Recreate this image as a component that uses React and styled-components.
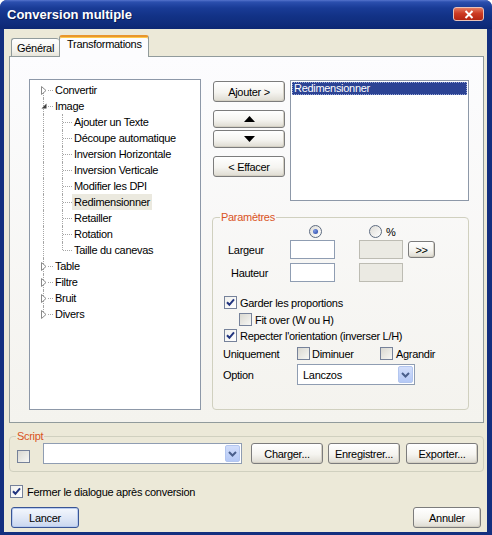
import React from "react";
import styled, { createGlobalStyle, css } from "styled-components";

const GlobalStyle = createGlobalStyle`
  html, body {
    margin: 0;
    padding: 0;
    background: #ffffff;
  }
  body {
    font-family: "Liberation Sans", Arial, sans-serif;
    font-size: 11px;
    letter-spacing: -0.3px;
    color: #000;
  }
  * {
    box-sizing: border-box;
  }
  button, input {
    font: inherit;
    letter-spacing: inherit;
    color: inherit;
  }
`;

const Window = styled.div`
  width: 492px;
  height: 535px;
  display: flex;
  flex-direction: column;
  background: #132f7f;
  border-radius: 7px 7px 0 0;
  overflow: hidden;
`;

const TitleBar = styled.div`
  flex: none;
  height: 29px;
  display: flex;
  align-items: center;
  justify-content: space-between;
  padding: 0 8px 1px 7px;
  background: linear-gradient(
    to bottom,
    #5574cc 0px,
    #2b4fae 2px,
    #193b96 8px,
    #123286 16px,
    #0f2c7c 24px,
    #0c2773 29px
  );
`;

const Title = styled.span`
  color: #fff;
  font-weight: bold;
  font-size: 13px;
  letter-spacing: 0;
  text-shadow: 1px 1px 0 #0a1a50;
`;

const CloseButton = styled.div`
  width: 31px;
  height: 14px;
  border: 1px solid #e9c2b8;
  border-radius: 3px;
  background: linear-gradient(#e47a60, #cd3b24 45%, #b42512);
  display: flex;
  align-items: center;
  justify-content: center;
`;

const Client = styled.div`
  flex: 1;
  margin: 0 5px 3px 4px;
  padding: 6px 3px 0 5px;
  background: #ece9d8;
  display: flex;
  flex-direction: column;
`;

const TabRow = styled.div`
  display: flex;
  align-items: flex-end;
  height: 22px;
  padding-left: 2px;
  margin-bottom: -1px;
  position: relative;
  z-index: 1;
`;

const Tab = styled.div`
  border: 1px solid #919b9c;
  border-bottom: none;
  border-radius: 3px 3px 0 0;
  ${(p) =>
    p.$active
      ? css`
          height: 22px;
          padding: 1px 6px 0 7px;
          line-height: 13px;
          background: #fcfcfe;
          border-top: 2px solid #e8962e;
          box-shadow: inset 0 1px 0 #ffc94a;
        `
      : css`
          height: 18px;
          margin-bottom: 1px;
          padding: 1px 5px 0 5px;
          line-height: 16px;
          background: linear-gradient(#ffffff, #f3f2ec 70%, #e6e4da);
          border-right: none;
        `}
`;

const TabPanel = styled.div`
  height: 367px;
  border: 1px solid #919b9c;
  background: linear-gradient(#fcfcfe, #f4f3ee);
  padding: 22px 13px 12px 19px;
  display: flex;
  gap: 11px;
`;

const Tree = styled.div`
  width: 172px;
  flex: none;
  border: 1px solid #8d98a8;
  background: #fff;
  padding: 2px 0 0 10px;
`;

const TreeRow = styled.div`
  display: flex;
  align-items: center;
  height: 16px;
`;

const Gutter = styled.span`
  position: relative;
  width: 8px;
  height: 16px;
  flex: none;
  display: flex;
  align-items: center;
  &::before {
    content: "";
    position: absolute;
    left: 3px;
    top: ${(p) => (p.$guide === "first" ? "8px" : "0")};
    bottom: ${(p) => (p.$guide === "last" ? "8px" : "0")};
    border-left: 1px dotted #a6a6a6;
  }
  svg {
    position: relative;
    z-index: 1;
    margin-left: 1px;
  }
`;

const HDots = styled.span`
  width: 5px;
  flex: none;
  border-top: 1px dotted #a6a6a6;
`;

const Spacer = styled.span`
  width: ${(p) => p.$w}px;
  flex: none;
`;

const ChildGuide = styled.span`
  position: relative;
  width: 10px;
  height: 16px;
  flex: none;
  &::before {
    content: "";
    position: absolute;
    left: 0;
    top: 0;
    bottom: ${(p) => (p.$last ? "8px" : "0")};
    border-left: 1px dotted #a6a6a6;
  }
  &::after {
    content: "";
    position: absolute;
    left: 1px;
    right: 0;
    top: 8px;
    border-top: 1px dotted #a6a6a6;
  }
`;

const TreeLabel = styled.span`
  padding: 0 2px;
  line-height: 16px;
  white-space: nowrap;
  background: ${(p) => (p.$selected ? "#ebe9df" : "transparent")};
`;

const RightArea = styled.div`
  width: 257px;
  flex: none;
  display: flex;
  flex-direction: column;
`;

const TopRow = styled.div`
  display: flex;
  gap: 5px;
  margin-top: 1px;
  padding-left: 1px;
`;

const ButtonColumn = styled.div`
  width: 72px;
  flex: none;
  display: flex;
  flex-direction: column;
  padding-top: 1px;
`;

const Button = styled.button`
  width: ${(p) => p.$w || 72}px;
  height: ${(p) => p.$h || 21}px;
  margin: 0;
  margin-top: ${(p) => p.$mt || 0}px;
  margin-left: ${(p) => p.$ml || 0}px;
  padding: 0;
  border: 1px solid #7c7c7c;
  border-radius: 3px;
  background: linear-gradient(#ffffff, #f5f4f0 55%, #dedbd1);
  box-shadow: inset -1px -1px 0 #d4d0c4;
  display: flex;
  align-items: center;
  justify-content: center;
  flex: none;
  ${(p) =>
    p.$primary &&
    css`
      border-color: #3a5595;
      background: linear-gradient(#f4f7fd, #dfe7f6 55%, #c9d6ef);
      box-shadow: inset 0 0 0 1px #b7cbf0;
    `}
`;

const ListBox = styled.div`
  width: 179px;
  height: 121px;
  border: 1px solid #8d98a8;
  background: #fff;
  padding: 1px;
`;

const ListItem = styled.div`
  height: 13px;
  line-height: 13px;
  padding-left: 2px;
  color: #fff;
  background: #2c4394;
  outline: 1px dotted #97a6d6;
  outline-offset: -1px;
`;

const Group = styled.fieldset`
  margin: ${(p) => p.$mt || 0}px 0 0 0;
  padding: ${(p) => p.$pad};
  border: 1px solid #d0d0bf;
  border-radius: 4px;
  min-width: 0;
  ${(p) =>
    p.$fill &&
    css`
      flex: 1;
    `}
`;

const Legend = styled.legend`
  color: #d9541e;
  line-height: 13px;
  padding: 0 1px;
  margin-left: ${(p) => p.$ml}px;
`;

const Row = styled.div`
  display: flex;
  align-items: center;
  height: ${(p) => p.$h || 13}px;
  margin-top: ${(p) => p.$mt || 0}px;
  padding-left: ${(p) => p.$pl || 0}px;
`;

const Cell = styled.span`
  width: ${(p) => p.$w}px;
  padding-left: ${(p) => p.$pl || 0}px;
  flex: none;
  display: flex;
  align-items: center;
  white-space: nowrap;
`;

const TextBox = styled.div`
  width: ${(p) => p.$w}px;
  height: 19px;
  flex: none;
  margin-left: ${(p) => p.$ml || 0}px;
  border: 1px solid ${(p) => (p.$disabled ? "#bdbcb3" : "#8f9db2")};
  background: ${(p) => (p.$disabled ? "#ebeae3" : "#fff")};
`;

const RadioOuter = styled.span`
  width: 13px;
  height: 13px;
  flex: none;
  border-radius: 50%;
  border: 1px solid #5d6b80;
  background: linear-gradient(135deg, #dedcd6, #ffffff);
  display: flex;
  align-items: center;
  justify-content: center;
  margin-left: ${(p) => p.$ml || 0}px;
`;

const RadioDot = styled.span`
  width: 5px;
  height: 5px;
  border-radius: 50%;
  background: radial-gradient(circle at 35% 35%, #7e9ae6, #21409e);
`;

const CheckBox = styled.span`
  width: 13px;
  height: 13px;
  flex: none;
  border: 1px solid #76829a;
  background: ${(p) =>
    p.$checked
      ? "linear-gradient(135deg, #f0f0ec, #ffffff)"
      : "linear-gradient(135deg, #d9d8d1, #f7f7f4)"};
  display: flex;
  align-items: center;
  justify-content: center;
  margin-left: ${(p) => p.$ml || 0}px;
  ${(p) =>
    p.$low &&
    css`
      align-self: flex-end;
      margin-bottom: 1px;
    `}
`;

const CheckText = styled.span`
  margin-left: ${(p) => p.$ml || 3}px;
  white-space: nowrap;
`;

const Combo = styled.div`
  width: ${(p) => p.$w}px;
  height: 21px;
  flex: none;
  margin-left: ${(p) => p.$ml || 0}px;
  border: 1px solid #8f9db2;
  background: #fff;
  display: flex;
  align-items: center;
  justify-content: space-between;
  padding: 1px;
`;

const ComboText = styled.span`
  padding-left: 4px;
`;

const ComboArrow = styled.span`
  width: 15px;
  height: 17px;
  border: 1px solid #b3c6ef;
  border-radius: 2px;
  background: linear-gradient(#d2defb, #b5c9f6);
  display: flex;
  align-items: center;
  justify-content: center;
`;

const ScriptRow = styled.div`
  display: flex;
  align-items: center;
  height: 21px;
`;

const CheckLine = styled.div`
  display: flex;
  align-items: center;
  margin-top: 13px;
  padding-left: 1px;
`;

const BottomRow = styled.div`
  display: flex;
  justify-content: space-between;
  margin-top: 9px;
  padding: 0 3px 0 2px;
`;

const Check = () => (
  <svg width="9" height="9" viewBox="0 0 9 9">
    <path d="M1 4.2 L3.4 6.8 L8 1.4" fill="none" stroke="#22357f" strokeWidth="2" />
  </svg>
);

const Chevron = () => (
  <svg width="9" height="6" viewBox="0 0 9 6">
    <path d="M1 1 L4.5 4.5 L8 1" fill="none" stroke="#4a5f8c" strokeWidth="2" />
  </svg>
);

const Expander = ({ open }) =>
  open ? (
    <svg width="6" height="6" viewBox="0 0 6 6">
      <polygon points="5.5,0.5 5.5,5.5 0.5,5.5" fill="#3f3f3f" />
    </svg>
  ) : (
    <svg width="6" height="9" viewBox="0 0 6 9">
      <polygon points="0.5,0.5 5,4.5 0.5,8.5" fill="#fff" stroke="#8a8a8a" />
    </svg>
  );

const TREE = [
  { label: "Convertir", toggle: "closed", guide: "first" },
  { label: "Image", toggle: "open" },
  { label: "Ajouter un Texte", child: true },
  { label: "Découpe automatique", child: true },
  { label: "Inversion Horizontale", child: true },
  { label: "Inversion Verticale", child: true },
  { label: "Modifier les DPI", child: true },
  { label: "Redimensionner", child: true, selected: true },
  { label: "Retailler", child: true },
  { label: "Rotation", child: true },
  { label: "Taille du canevas", child: true, last: true },
  { label: "Table", toggle: "closed" },
  { label: "Filtre", toggle: "closed" },
  { label: "Bruit", toggle: "closed" },
  { label: "Divers", toggle: "closed", guide: "last" },
];

const CheckItem = ({ checked, children, gap, ml }) => (
  <>
    <CheckBox $checked={checked} $ml={ml}>
      {checked && <Check />}
    </CheckBox>
    <CheckText $ml={gap}>{children}</CheckText>
  </>
);

export default function App() {
  return (
    <>
      <GlobalStyle />
      <Window>
        <TitleBar>
          <Title>Conversion multiple</Title>
          <CloseButton>
            <svg width="10" height="9" viewBox="0 0 10 9">
              <path d="M1.5 1 L8.5 8 M8.5 1 L1.5 8" stroke="#fff" strokeWidth="2" />
            </svg>
          </CloseButton>
        </TitleBar>

        <Client>
          <TabRow>
            <Tab>Général</Tab>
            <Tab $active>Transformations</Tab>
          </TabRow>

          <TabPanel>
            <Tree>
              {TREE.map((item) => (
                <TreeRow key={item.label}>
                  <Gutter $guide={item.guide}>
                    {item.toggle && <Expander open={item.toggle === "open"} />}
                  </Gutter>
                  {item.child ? (
                    <>
                      <Spacer $w={14} />
                      <ChildGuide $last={item.last} />
                    </>
                  ) : (
                    <HDots />
                  )}
                  <TreeLabel $selected={item.selected}>{item.label}</TreeLabel>
                </TreeRow>
              ))}
            </Tree>

            <RightArea>
              <TopRow>
                <ButtonColumn>
                  <Button>Ajouter &gt;</Button>
                  <Button $h={18} $mt={8}>
                    <svg width="11" height="6" viewBox="0 0 11 6">
                      <polygon points="5.5,0 11,6 0,6" fill="#000" />
                    </svg>
                  </Button>
                  <Button $h={18} $mt={2}>
                    <svg width="11" height="6" viewBox="0 0 11 6">
                      <polygon points="0,0 11,0 5.5,6" fill="#000" />
                    </svg>
                  </Button>
                  <Button $mt={8}>&lt; Effacer</Button>
                </ButtonColumn>
                <ListBox>
                  <ListItem>Redimensionner</ListItem>
                </ListBox>
              </TopRow>

              <Group $mt={10} $pad="1px 10px 0 10px" $fill>
                <Legend $ml={-3}>Paramètres</Legend>
                <Row $pl={86}>
                  <RadioOuter>
                    <RadioDot />
                  </RadioOuter>
                  <RadioOuter $ml={47} />
                  <CheckText $ml={4}>%</CheckText>
                </Row>
                <Row $h={19} $mt={2}>
                  <Cell $w={67} $pl={5}>
                    Largeur
                  </Cell>
                  <TextBox $w={45} />
                  <TextBox $w={44} $ml={24} $disabled />
                  <Button $w={27} $h={17} $ml={5}>
                    &gt;&gt;
                  </Button>
                </Row>
                <Row $h={19} $mt={4}>
                  <Cell $w={67} $pl={8}>
                    Hauteur
                  </Cell>
                  <TextBox $w={45} />
                  <TextBox $w={44} $ml={24} $disabled />
                </Row>
                <Row $mt={14} $pl={1}>
                  <CheckItem checked>Garder les proportions</CheckItem>
                </Row>
                <Row $mt={4} $pl={16}>
                  <CheckItem>Fit over (W ou H)</CheckItem>
                </Row>
                <Row $mt={3} $pl={1}>
                  <CheckItem checked>Repecter l'orientation (inverser L/H)</CheckItem>
                </Row>
                <Row $mt={5}>
                  <Cell $w={74}>Uniquement</Cell>
                  <Cell $w={83}>
                    <CheckItem gap={2}>Diminuer</CheckItem>
                  </Cell>
                  <CheckItem>Agrandir</CheckItem>
                </Row>
                <Row $h={21} $mt={4}>
                  <Cell $w={74}>Option</Cell>
                  <Combo $w={118}>
                    <ComboText>Lanczos</ComboText>
                    <ComboArrow>
                      <Chevron />
                    </ComboArrow>
                  </Combo>
                </Row>
              </Group>
            </RightArea>
          </TabPanel>

          <Group $mt={7} $pad="0 6px 7px 7px">
            <Legend $ml={-1}>Script</Legend>
            <ScriptRow>
              <CheckBox $low />
              <Combo $w={199} $ml={13}>
                <span />
                <ComboArrow>
                  <Chevron />
                </ComboArrow>
              </Combo>
              <Button $ml={9}>Charger...</Button>
              <Button $ml={5}>Enregistrer...</Button>
              <Button $ml={6}>Exporter...</Button>
            </ScriptRow>
          </Group>

          <CheckLine>
            <CheckItem checked gap={4}>
              Fermer le dialogue après conversion
            </CheckItem>
          </CheckLine>

          <BottomRow>
            <Button $w={68} $primary>
              Lancer
            </Button>
            <Button $w={68}>Annuler</Button>
          </BottomRow>
        </Client>
      </Window>
    </>
  );
}
